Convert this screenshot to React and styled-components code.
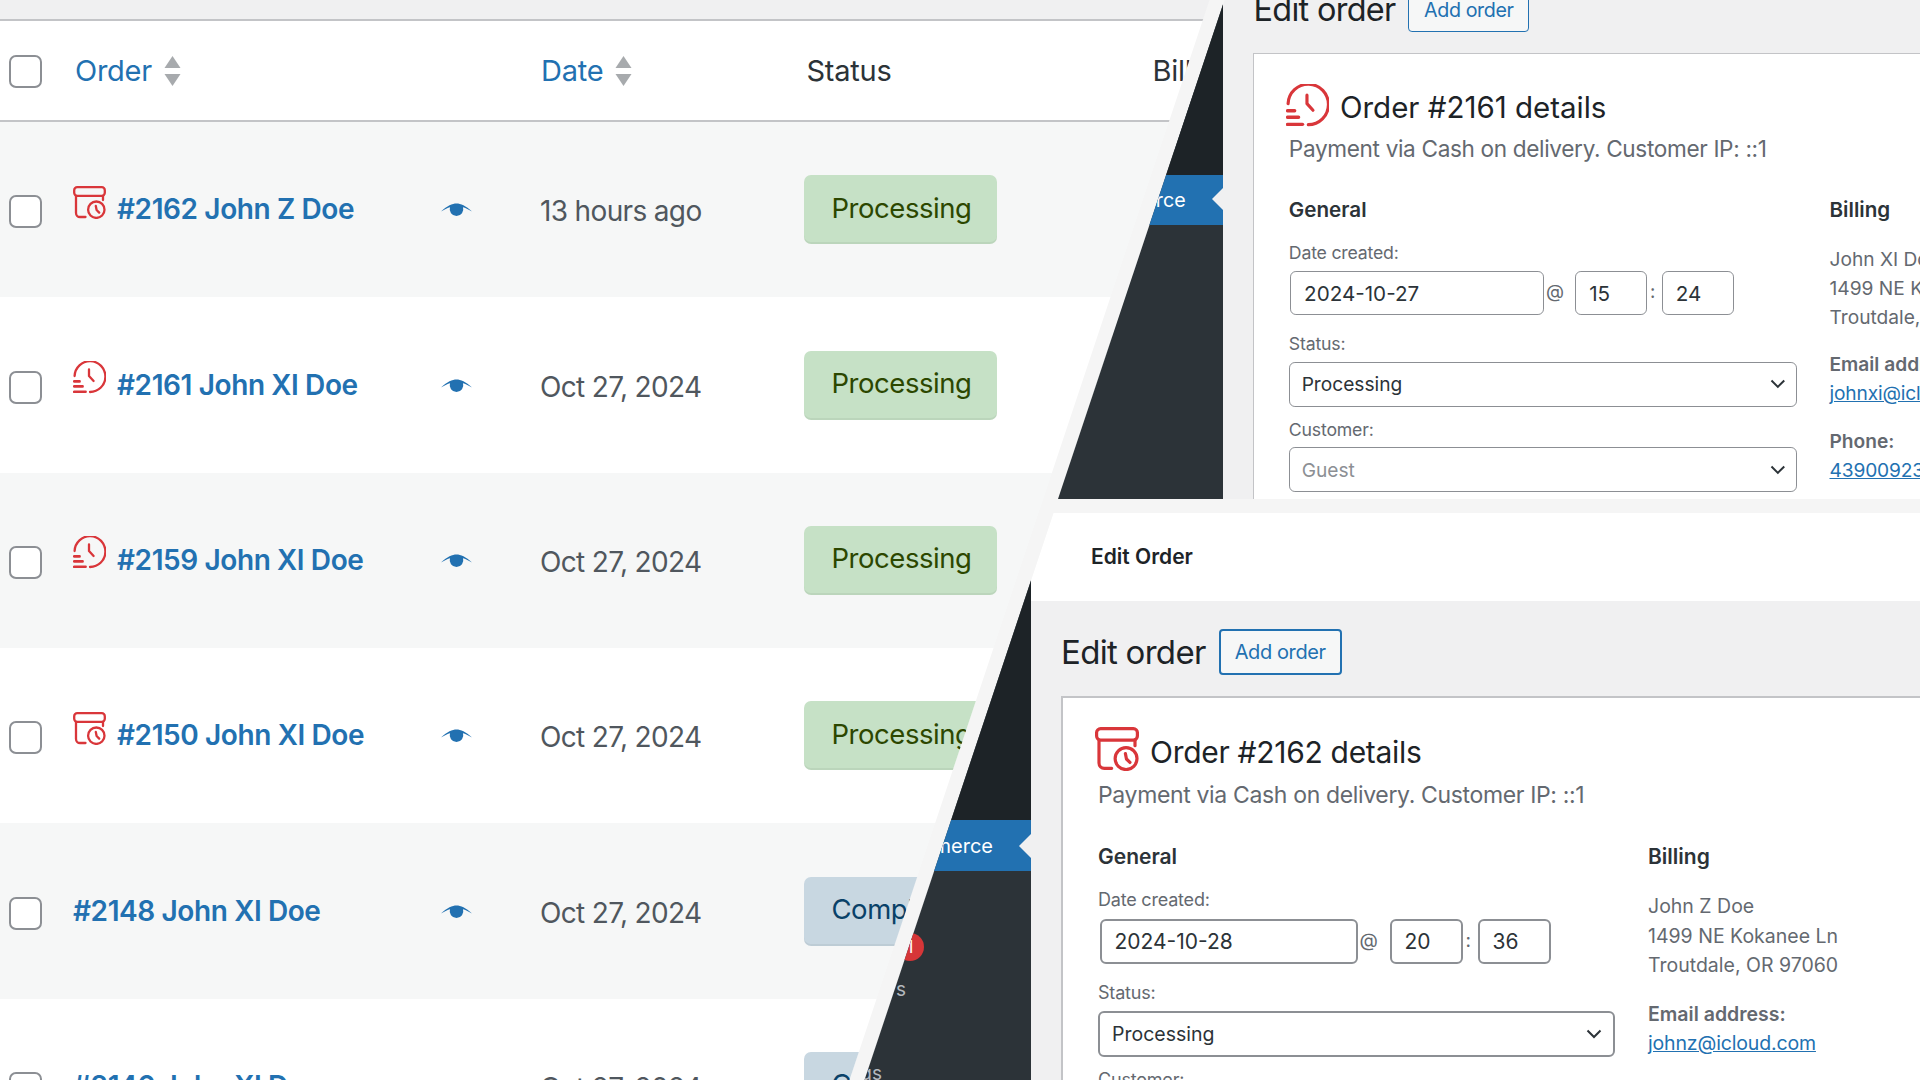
import React from "react";
import styled, { createGlobalStyle } from "styled-components";

const Global = createGlobalStyle`
  html, body { margin: 0; padding: 0; background: #f5f5f5; }
  body { font-family: Inter, "Liberation Sans", sans-serif; overflow: hidden; }
  * { box-sizing: border-box; }
`;

const Canvas = styled.div`
  position: relative;
  width: 1920px;
  height: 1080px;
  overflow: hidden;
  background: #f5f5f5;
`;

const Pane = styled.section`
  position: absolute;
  inset: 0;
  overflow: hidden;
  clip-path: polygon(${(p) => p.$clip});
`;

/* ---------- orders list ---------- */
const ListWindow = styled.div`
  width: 1240px;
  display: flex;
  flex-direction: column;
`;
const TopStrip = styled.div`
  height: 19px;
  background: #f0f0f1;
`;
const columns = "73px 368.6px 98.4px 264.5px 348px 1fr";
const HeadRow = styled.div`
  display: grid;
  grid-template-columns: ${columns};
  align-items: center;
  height: 103px;
  background: #fff;
  border-top: 2px solid #c3c4c7;
  border-bottom: 2px solid #c3c4c7;
  font-size: 29px;
  color: #2c3338;
  letter-spacing: -0.25px;
`;
const Row = styled.div`
  display: grid;
  grid-template-columns: ${columns};
  align-items: center;
  height: 175.35px;
  background: ${(p) => (p.$alt ? "#f6f7f7" : "#fff")};
`;
const Check = styled.span`
  display: block;
  width: 33px;
  height: 33px;
  margin-left: 9px;
  margin-top: ${(p) => (p.$head ? "2px" : "4px")};
  background: #fff;
  border: 2px solid #8c8f94;
  border-radius: 7px;
`;
const SortHead = styled.span`
  display: inline-flex;
  align-items: center;
  gap: 12px;
  color: #2271b1;
  margin-left: ${(p) => p.$indent}px;
`;
const HeadText = styled.span`
  margin-left: ${(p) => p.$indent}px;
`;
const OrderCell = styled.div`
  display: flex;
  align-items: center;
  gap: 11px;
`;
const OrderIcon = styled.svg`
  width: 33px;
  height: 33px;
  margin-bottom: 15px;
  fill: none;
  stroke: #d9363a;
  stroke-width: 2.3;
  stroke-linecap: round;
  stroke-linejoin: round;
`;
const OrderLink = styled.a`
  font-size: 28px;
  font-weight: 600;
  letter-spacing: -0.4px;
  color: #2271b1;
  white-space: nowrap;
  margin-bottom: 1px;
`;
const DateText = styled.span`
  font-size: 28px;
  letter-spacing: -0.65px;
  color: #50575e;
  white-space: nowrap;
  margin-top: 3px;
`;
const Badge = styled.span`
  display: inline-flex;
  align-items: center;
  width: 192.5px;
  height: 69px;
  padding: 0 0 4px 27px;
  border-radius: 7px;
  font-size: 27.5px;
  letter-spacing: -0.45px;
  background: ${(p) => (p.$done ? "#c8d7e1" : "#c6e1c6")};
  color: ${(p) => (p.$done ? "#094168" : "#2c4700")};
  box-shadow: inset 0 -2px 0 rgba(0, 0, 0, 0.05);
`;
const EyeIcon = styled.svg`
  margin: 3px 0 0 -1px;
  fill: #2271b1;
`;

const SortArrows = () => (
  <svg width="17" height="30" viewBox="0 0 17 30" fill="#a7aaad">
    <path d="M8.5 0 L16.5 12 H0.5 Z" />
    <path d="M8.5 30 L16.5 18 H0.5 Z" />
  </svg>
);
const Eye = () => (
  <EyeIcon width="31" height="16" viewBox="0 0 30 15">
    <path d="M0 8 C6 2.5 11 0.3 15 0.3 C19 0.3 24 2.5 30 8 C26 5.6 23.5 4.4 21.3 3.8 A6.6 6.6 0 1 1 8.7 3.8 C6.5 4.4 4 5.6 0 8 Z" />
  </EyeIcon>
);
const CalendarClockPaths = () => (
  <>
    <rect x="1.2" y="1.2" width="30.6" height="8.6" rx="3" />
    <path d="M3 10 V27 a4 4 0 0 0 4 4 H12.5" />
    <path d="M30 10 V14" />
    <circle cx="23.3" cy="23.7" r="8.2" />
    <path d="M22.8 20 L23.6 24 L26.2 26.6" />
  </>
);
const HistoryPaths = () => (
  <>
    <path d="M1.6 15 A15.4 15.4 0 1 1 17 31" />
    <path d="M16 8.5 V15 L20.6 20" />
    <path d="M1.2 20.4 H6.6" strokeWidth="2.6" />
    <path d="M1.2 25.4 H9.6" strokeWidth="2.6" />
    <path d="M1.2 30.8 H12.6" strokeWidth="2.6" />
  </>
);

const rows = [
  { icon: "cal", name: "#2162 John Z Doe", date: "13 hours ago", status: "Processing" },
  { icon: "his", name: "#2161 John XI Doe", date: "Oct 27, 2024", status: "Processing" },
  { icon: "his", name: "#2159 John XI Doe", date: "Oct 27, 2024", status: "Processing" },
  { icon: "cal", name: "#2150 John XI Doe", date: "Oct 27, 2024", status: "Processing" },
  { name: "#2148 John XI Doe", date: "Oct 27, 2024", status: "Completed", done: true },
  { name: "#2146 John XI Doe", date: "Oct 27, 2024", status: "Completed", done: true },
];

const OrdersList = () => (
  <ListWindow>
    <TopStrip />
    <HeadRow>
      <Check $head />
      <SortHead $indent={2}>
        Order <SortArrows />
      </SortHead>
      <span />
      <SortHead $indent={1}>
        Date <SortArrows />
      </SortHead>
      <HeadText $indent={2}>Status</HeadText>
      <span>Billing</span>
    </HeadRow>
    {rows.map((r, i) => (
      <Row key={r.name} $alt={i % 2 === 0}>
        <Check />
        <OrderCell>
          {r.icon && (
            <OrderIcon viewBox="0 0 33 33">
              {r.icon === "cal" ? <CalendarClockPaths /> : <HistoryPaths />}
            </OrderIcon>
          )}
          <OrderLink>{r.name}</OrderLink>
        </OrderCell>
        <Eye />
        <DateText>{r.date}</DateText>
        <Badge $done={r.done}>{r.status}</Badge>
      </Row>
    ))}
  </ListWindow>
);

/* ---------- edit order window ---------- */
const WindowPos = styled.div`
  position: absolute;
  left: ${(p) => p.$x}px;
  top: ${(p) => p.$y}px;
`;
const AppWindow = styled.div`
  zoom: ${(p) => p.$zoom};
  display: flex;
  width: 1200px;
  height: 800px;
`;
const Sidebar = styled.nav`
  flex: 0 0 200px;
  min-width: 0;
  display: flex;
  flex-direction: column;
  background: #2c3338;
`;
const SideTop = styled.div`
  height: 307px;
  background: #1d2327;
`;
const SideActive = styled.div`
  position: relative;
  display: flex;
  align-items: center;
  justify-content: flex-end;
  height: 51px;
  padding-right: 38px;
  background: #2271b1;
  color: #fff;
  font-size: 20px;
  &::after {
    content: "";
    position: absolute;
    right: 0;
    top: 50%;
    margin-top: -12px;
    border: 12px solid transparent;
    border-right-color: #f0f0f1;
    border-left-width: 0;
  }
`;
const SideItem = styled.div`
  display: flex;
  justify-content: flex-end;
  align-items: center;
  height: 43px;
  padding-right: ${(p) => p.$pad}px;
  color: #b4b9be;
  font-size: 19px;
  white-space: nowrap;
  margin-top: ${(p) => p.$mt || 0}px;
`;
const Count = styled.span`
  display: inline-flex;
  align-items: center;
  justify-content: center;
  flex: none;
  width: 28px;
  height: 28px;
  margin-left: 8px;
  border-radius: 50%;
  background: #d63638;
  color: #fff;
  font-size: 17px;
`;
const Main = styled.div`
  flex: 1;
  min-width: 0;
  display: flex;
  flex-direction: column;
  background: #f0f0f1;
`;
const TopBar = styled.header`
  display: flex;
  align-items: center;
  height: 88px;
  padding: 0 0 2px 60px;
  background: #fff;
  color: #1d2327;
  font-size: 21px;
  font-weight: 600;
`;
const Content = styled.div`
  flex: 1;
  padding: 28px 0 0 ${(p) => p.$pad}px;
`;
const HeadingRow = styled.div`
  display: flex;
  align-items: center;
  gap: 13px;
`;
const Heading = styled.h1`
  margin: 0;
  font-size: 33px;
  font-weight: 400;
  letter-spacing: -0.7px;
  color: #1d2327;
`;
const AddButton = styled.a`
  display: inline-flex;
  align-items: center;
  justify-content: center;
  width: 123px;
  height: 46px;
  background: #f6f7f7;
  border: 2px solid #2271b1;
  border-radius: 4px;
  color: #2271b1;
  font-size: 20px;
  letter-spacing: -0.4px;
`;
const Card = styled.div`
  margin-top: 21px;
  height: 600px;
  padding: 29px 0 0 35px;
  background: #fff;
  border: solid #c3c4c7;
  border-width: 2px 0 0 2px;
`;
const TitleRow = styled.div`
  display: flex;
  align-items: center;
  gap: 11px;
  height: 44px;
  margin-left: -3px;
`;
const TitleIcon = styled.svg`
  width: 44px;
  height: 44px;
  margin-top: ${(p) => p.$drop}px;
  fill: none;
  stroke: #d9363a;
  stroke-width: 2.4;
  stroke-linecap: round;
  stroke-linejoin: round;
`;
const Title = styled.h2`
  margin: 6px 0 0;
  font-size: 30px;
  font-weight: 400;
  letter-spacing: ${(p) => p.$ls}px;
  color: #1d2327;
`;
const Sub = styled.p`
  margin: 9px 0 0;
  font-size: 23px;
  line-height: 30px;
  letter-spacing: -0.35px;
  color: #646970;
`;
const Columns = styled.div`
  display: grid;
  grid-template-columns: 517px 300px;
  column-gap: 33px;
  margin-top: 34px;
`;
const Group = styled.h3`
  margin: 0;
  font-size: 21px;
  line-height: 26px;
  font-weight: 600;
  color: #2c3338;
`;
const Label = styled.label`
  display: block;
  margin-top: ${(p) => p.$mt}px;
  font-size: 18px;
  line-height: 26px;
  letter-spacing: -0.2px;
  color: #646970;
`;
const DateRow = styled.div`
  display: flex;
  align-items: center;
  margin: 6px 0 0 1.5px;
`;
const Input = styled.div`
  display: flex;
  align-items: center;
  width: ${(p) => p.$w}px;
  height: 45px;
  padding-left: 13px;
  background: #fff;
  border: 2px solid #8c8f94;
  border-radius: 6px;
  font-size: 21px;
  color: #2c3338;
`;
const Sep = styled.span`
  width: ${(p) => p.$w}px;
  padding-left: ${(p) => p.$inset}px;
  margin-top: -3px;
  font-size: 19px;
  color: #646970;
`;
const Select = styled.div`
  display: flex;
  align-items: center;
  justify-content: space-between;
  height: 46px;
  margin-top: 5px;
  padding: 0 11px 0 12px;
  background: #fff;
  border: 2px solid #8c8f94;
  border-radius: 6px;
  font-size: 19.5px;
  color: ${(p) => (p.$muted ? "#8c8f94" : "#2c3338")};
`;
const Addr = styled.p`
  margin: 22px 0 0;
  font-size: 19.5px;
  line-height: 29.5px;
  color: #646970;
  white-space: nowrap;
`;
const AddrLabel = styled.p`
  margin: ${(p) => p.$mt}px 0 0;
  font-size: 19.5px;
  line-height: 29.5px;
  font-weight: 600;
  color: #646970;
`;
const AddrLink = styled.a`
  display: block;
  font-size: 19.5px;
  line-height: 29.5px;
  letter-spacing: -0.15px;
  color: #2271b1;
  text-decoration: underline;
  white-space: nowrap;
`;
const Chevron = () => (
  <svg width="16" height="10" viewBox="0 0 16 10" fill="none" stroke="#2c3338" strokeWidth="2">
    <path d="M1.5 1.5 L8 8 L14.5 1.5" />
  </svg>
);

const EditWindow = ({ x, y, zoom, pad, ls, drop, num, kind, date, hour, minute, name, email }) => (
  <WindowPos $x={x} $y={y}>
    <AppWindow $zoom={zoom}>
      <Sidebar>
        <SideTop />
        <SideActive>WooCommerce</SideActive>
        <SideItem $mt={54} $pad={107}>
          Orders<Count>1</Count>
        </SideItem>
        <SideItem $pad={125}>Customers</SideItem>
        <SideItem $mt={41} $pad={149}>Settings</SideItem>
      </Sidebar>
      <Main>
        <TopBar>Edit Order</TopBar>
        <Content $pad={pad}>
          <HeadingRow>
            <Heading>Edit order</Heading>
            <AddButton>Add order</AddButton>
          </HeadingRow>
          <Card>
            <TitleRow>
              <TitleIcon viewBox="0 0 33 33" $drop={drop}>
                {kind === "cal" ? <CalendarClockPaths /> : <HistoryPaths />}
              </TitleIcon>
              <Title $ls={ls}>Order #{num} details</Title>
            </TitleRow>
            <Sub>Payment via Cash on delivery. Customer IP: ::1</Sub>
            <Columns>
              <div>
                <Group>General</Group>
                <Label $mt={17}>Date created:</Label>
                <DateRow>
                  <Input $w={258}>{date}</Input>
                  <Sep $w={32} $inset={2}>@</Sep>
                  <Input $w={73}>{hour}</Input>
                  <Sep $w={15} $inset={3}>:</Sep>
                  <Input $w={73}>{minute}</Input>
                </DateRow>
                <Label $mt={16}>Status:</Label>
                <Select>
                  Processing
                  <Chevron />
                </Select>
                <Label $mt={10}>Customer:</Label>
                <Select $muted>
                  Guest
                  <Chevron />
                </Select>
              </div>
              <div>
                <Group>Billing</Group>
                <Addr>
                  {name}
                  <br />
                  1499 NE Kokanee Ln
                  <br />
                  Troutdale, OR 97060
                </Addr>
                <AddrLabel $mt={19}>Email address:</AddrLabel>
                <AddrLink>{email}</AddrLink>
                <AddrLabel $mt={19}>Phone:</AddrLabel>
                <AddrLink>4390092345</AddrLink>
              </div>
            </Columns>
          </Card>
        </Content>
      </Main>
    </AppWindow>
  </WindowPos>
);

export default function App() {
  return (
    <>
      <Global />
      <Canvas>
        <Pane $clip="0 0, 1209.5px 0, 849.5px 1080px, 0 1080px">
          <OrdersList />
        </Pane>
        <Pane $clip="1224.5px 0, 1920px 0, 1920px 499px, 1058px 499px">
          <EditWindow
            x={1026.4}
            y={-127}
            zoom={0.983}
            pad={31}
            ls={0}
            drop={4}
            num="2161"
            kind="his"
            date="2024-10-27"
            hour="15"
            minute="24"
            name="John XI Doe"
            email="johnxi@icloud.com"
          />
        </Pane>
        <Pane $clip="1053.5px 513px, 1920px 513px, 1920px 1080px, 864.5px 1080px">
          <EditWindow
            x={831}
            y={513}
            zoom={1}
            pad={30}
            ls={-0.3}
            drop={0}
            num="2162"
            kind="cal"
            date="2024-10-28"
            hour="20"
            minute="36"
            name="John Z Doe"
            email="johnz@icloud.com"
          />
        </Pane>
      </Canvas>
    </>
  );
}
